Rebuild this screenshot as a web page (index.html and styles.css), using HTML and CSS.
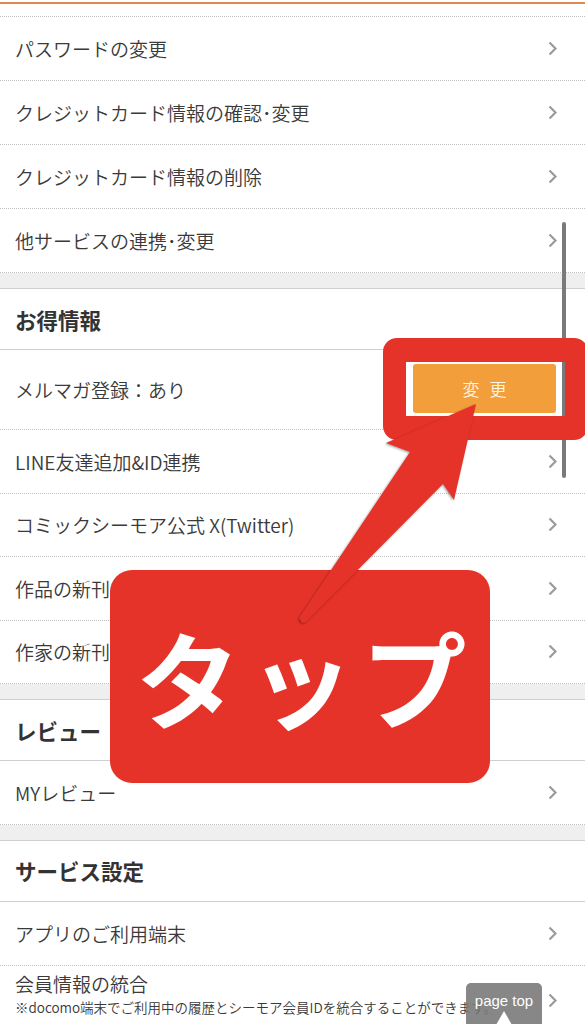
FILE: index.html
```html
<!DOCTYPE html>
<html lang="ja">
<head>
    <meta charset="UTF-8">
    <meta name="viewport" content="width=device-width, initial-scale=1.0">
    <title>会員情報</title>
    <link rel="stylesheet" href="styles.css">
</head>
<body>
    <div class="top"><div class="top-line"></div></div>

    <div class="row"><span>パスワードの変更</span><svg class="chev" viewBox="0 0 9 15"><polyline points="1.5,1.5 7.5,7.5 1.5,13.5"/></svg></div>
    <div class="row"><span>クレジットカード情報の確認･変更</span><svg class="chev" viewBox="0 0 9 15"><polyline points="1.5,1.5 7.5,7.5 1.5,13.5"/></svg></div>
    <div class="row"><span>クレジットカード情報の削除</span><svg class="chev" viewBox="0 0 9 15"><polyline points="1.5,1.5 7.5,7.5 1.5,13.5"/></svg></div>
    <div class="row"><span>他サービスの連携･変更</span><svg class="chev" viewBox="0 0 9 15"><polyline points="1.5,1.5 7.5,7.5 1.5,13.5"/></svg></div>

    <div class="gap"></div>
    <div class="head">お得情報</div>
    <div class="row row-mail"><span>メルマガ登録：あり</span><div class="btn">変更</div></div>
    <div class="row row-s"><span>LINE友達追加&amp;ID連携</span><svg class="chev" viewBox="0 0 9 15"><polyline points="1.5,1.5 7.5,7.5 1.5,13.5"/></svg></div>
    <div class="row row-s"><span>コミックシーモア公式 X(Twitter)</span><svg class="chev" viewBox="0 0 9 15"><polyline points="1.5,1.5 7.5,7.5 1.5,13.5"/></svg></div>
    <div class="row row-s"><span>作品の新刊お知らせ</span><svg class="chev" viewBox="0 0 9 15"><polyline points="1.5,1.5 7.5,7.5 1.5,13.5"/></svg></div>
    <div class="row row-s"><span>作家の新刊お知らせ</span><svg class="chev" viewBox="0 0 9 15"><polyline points="1.5,1.5 7.5,7.5 1.5,13.5"/></svg></div>

    <div class="gap"></div>
    <div class="head">レビュー</div>
    <div class="row row-s"><span>MYレビュー</span><svg class="chev" viewBox="0 0 9 15"><polyline points="1.5,1.5 7.5,7.5 1.5,13.5"/></svg></div>

    <div class="gap"></div>
    <div class="head">サービス設定</div>
    <div class="row"><span>アプリのご利用端末</span><svg class="chev" viewBox="0 0 9 15"><polyline points="1.5,1.5 7.5,7.5 1.5,13.5"/></svg></div>
    <div class="row row-note">
        <div>
            <div class="note-title">会員情報の統合</div>
            <div class="note">※docomo端末でご利用中の履歴とシーモア会員IDを統合することができます。</div>
        </div>
        <svg class="chev" viewBox="0 0 9 15"><polyline points="1.5,1.5 7.5,7.5 1.5,13.5"/></svg>
    </div>

    <!-- 説明用の重ね描き -->
    <div class="scroll"></div>
    <div class="frame"></div>
    <div class="tap">タップ</div>
    <svg class="arrow" viewBox="0 0 585 1024">
        <polygon points="299,618 410,452 386,443 476,404 454,500 443,484 306,622 302,623"/>
    </svg>
    <div class="pagetop">page top<div class="tri"></div></div>
</body>
</html>
```

FILE: styles.css
```css
body {
    margin: 0;
    width: 585px;
    height: 1024px;
    overflow: hidden;
    position: relative;
    background: #fff;
    color: #3a3a3a;
    font-family: "Noto Sans CJK JP", "Noto Sans", sans-serif;
    font-weight: 350;
}

.top {
    height: 17px;
    box-sizing: border-box;
    padding-top: 2px;
    border-bottom: 1px dotted #c2c2c2;
}

.top-line {
    height: 2px;
    background: #dc8a4f;
}

.row {
    display: flex;
    align-items: center;
    justify-content: space-between;
    height: 64px;
    box-sizing: border-box;
    padding: 0 28px 0 15px;
    border-bottom: 1px dotted #c2c2c2;
    font-size: 19px;
}

.row-s {
    height: 63.5px;
}

.row-mail {
    height: 80px;
}

.chev {
    width: 9px;
    height: 15px;
    flex: none;
}

.chev polyline {
    fill: none;
    stroke: #9b9b9b;
    stroke-width: 2.2;
}

.btn {
    width: 143px;
    height: 49px;
    margin-right: 1px;
    margin-top: -3px;
    border-radius: 3px;
    background: #f19e3b;
    color: #fff6e6;
    font-size: 17px;
    letter-spacing: 10px;
    padding-left: 10px;
    box-sizing: border-box;
    display: flex;
    align-items: center;
    justify-content: center;
}

.gap {
    height: 16px;
    box-sizing: border-box;
    background: #efefef;
    border-bottom: 1px solid #cfcfcf;
}

.head {
    height: 61px;
    box-sizing: border-box;
    display: flex;
    align-items: center;
    padding-left: 15px;
    border-bottom: 1px solid #cfcfcf;
    font-size: 21.5px;
    font-weight: 700;
    color: #333;
}

.row-note {
    height: 64px;
    align-items: flex-start;
    padding-top: 5px;
    border-bottom: none;
}

.row-note .chev {
    margin-top: 22px;
}

.note-title {
    font-size: 19px;
    line-height: 26px;
}

.note {
    font-size: 13.5px;
    line-height: 18px;
    margin-top: 1px;
}

.scroll {
    position: absolute;
    left: 562px;
    top: 222px;
    width: 4px;
    height: 256px;
    border-radius: 2px;
    background: #7a7a7a;
}

.frame {
    position: absolute;
    left: 383px;
    top: 338px;
    width: 205px;
    height: 102px;
    box-sizing: border-box;
    border: solid #e5332a;
    border-width: 24px 23px;
    border-radius: 14px;
}

.tap {
    position: absolute;
    left: 110px;
    top: 570px;
    width: 380px;
    height: 213px;
    border-radius: 22px;
    background: #e5332a;
    color: #fff;
    font-size: 105px;
    font-weight: 700;
    letter-spacing: 8px;
    padding: 0 0 4px 10px;
    box-sizing: border-box;
    display: flex;
    align-items: center;
    justify-content: center;
}

.arrow {
    position: absolute;
    left: 0;
    top: 0;
    width: 585px;
    height: 1024px;
    pointer-events: none;
}

.arrow polygon {
    fill: #e5332a;
    filter: drop-shadow(-1px 1px 1px rgba(0, 0, 0, 0.35));
}

.pagetop {
    position: absolute;
    left: 466px;
    top: 983px;
    width: 76px;
    height: 45px;
    box-sizing: border-box;
    padding-top: 9px;
    border-radius: 5px 5px 0 0;
    background: rgba(118, 118, 118, 0.88);
    color: #fff;
    font-family: "Liberation Sans", Arial, sans-serif;
    font-weight: 400;
    font-size: 15px;
    line-height: 18px;
    text-align: center;
}

.tri {
    width: 0;
    height: 0;
    margin: 1px auto 0;
    border-left: 8px solid transparent;
    border-right: 8px solid transparent;
    border-bottom: 14px solid #fff;
}
```
